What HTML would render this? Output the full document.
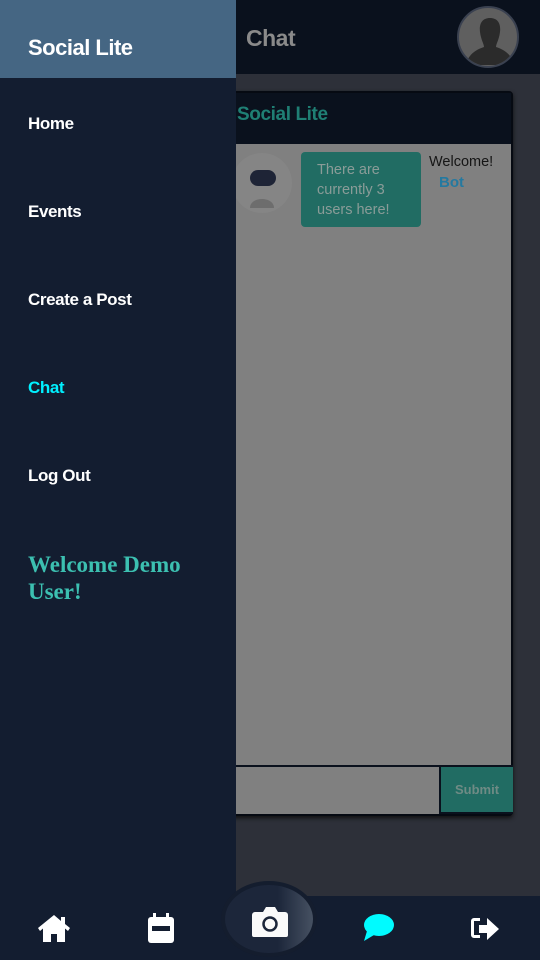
<!DOCTYPE html>
<html><head><style>
*{margin:0;padding:0;box-sizing:border-box}
body{width:540px;height:960px;overflow:hidden;background:#2d3039;font-family:"Liberation Sans",sans-serif;position:relative}
.top{position:absolute;left:0;top:0;width:540px;height:74px;background:#0a111d}
.title{position:absolute;left:246px;top:25px;color:#8a8a8a;font-size:23px;font-weight:bold;letter-spacing:-0.5px}
.av{position:absolute;left:457px;top:6px;width:62px;height:62px;border-radius:50%;background:#5f5f5f;border:2px solid #3a4150;overflow:hidden}
.card{position:absolute;left:180px;top:91px;width:333px;height:725px;background:#808080;border:2px solid #060a12;border-radius:4px;box-shadow:0 2px 4px #111}
.ch{position:absolute;left:0;top:0;right:0;height:51px;background:#0a111d}
.ch span{position:absolute;left:55px;top:11px;color:#1f7f74;font-size:19px;font-weight:bold;letter-spacing:-0.4px}
.bub{position:absolute;left:119px;top:59px;width:120px;height:75px;background:#216c63;border-radius:4px;color:#8a9c98;font-size:14.5px;line-height:20px;padding:8px 16px}
.wel{position:absolute;left:247px;top:61px;color:#151515;font-size:14.5px}
.bot{position:absolute;left:257px;top:81px;color:#2479a0;font-size:15px;font-weight:bold}
.inp{position:absolute;left:0;bottom:0;width:257px;height:49px;border-top:2px solid #0a111d;background:#808080}
.sub{position:absolute;left:257px;bottom:0;width:74px;height:49px;background:#216c63;border:2px solid #0a111d;border-right:0;color:#6f8b85;font-size:13px;font-weight:bold;text-align:center;line-height:45px}
.drawer{position:absolute;left:0;top:0;width:236px;height:896px;background:#131d30}
.dh{height:78px;background:#456683;color:#fff;font-size:22px;font-weight:bold;padding-left:28px;line-height:96px;letter-spacing:-0.5px}
.it{position:absolute;left:28px;color:#fff;font-size:17px;font-weight:bold;letter-spacing:-0.4px}
.wd{position:absolute;left:28px;top:551px;color:#3cc0b1;font-family:"Liberation Serif",serif;font-size:23px;font-weight:bold;line-height:27px}
.nav{position:absolute;left:0;top:896px;width:540px;height:64px;background:#131d30}
.cam{position:absolute;left:221px;top:881px;width:96px;height:76px;border-radius:50%;background:linear-gradient(90deg,#1c263a 60%,#465162);border:4px solid #141d2e}
svg{position:absolute}
</style></head><body>
<div class="top"></div>
<div class="title">Chat</div>
<div class="av"><svg width="62" height="62" viewBox="0 0 62 62" style="left:0;top:0"><path d="M31 10c8 0 11 6 10 14-1 8-4 12-4 15 9 3 16 8 18 18H7c2-10 9-15 18-18 0-3-3-7-4-15-1-8 2-14 10-14z" fill="#2b2b2b"/></svg></div>
<div class="card">
<div class="ch"><span>Social Lite</span></div>
<svg width="60" height="70" viewBox="0 0 60 70" style="left:50px;top:55px"><circle cx="30" cy="35" r="30" fill="#858585"/><rect x="18" y="22" width="26" height="16" rx="8" fill="#1e2436"/><path d="M18 60c0-12 24-12 24 0z" fill="#6d6d6d"/></svg>
<div class="bub">There are currently 3 users here!</div>
<div class="wel">Welcome!</div><div class="bot">Bot</div>
<div class="inp"></div><div class="sub">Submit</div>
</div>
<div class="drawer">
<div class="dh">Social Lite</div>
<div class="it" style="top:114px">Home</div>
<div class="it" style="top:202px">Events</div>
<div class="it" style="top:290px">Create a Post</div>
<div class="it" style="top:378px;color:#00f0ff">Chat</div>
<div class="it" style="top:466px">Log Out</div>
<div class="wd">Welcome Demo<br>User!</div>
</div>
<div class="nav"></div>
<div class="cam"></div>
<svg width="34" height="30" viewBox="0 0 34 30" style="left:37px;top:913px"><path d="M17 2L1 15l2 3 3-2.5V29h8v-8h6v8h8V15.5l3 2.5 2-3-5-4V4h-4v4z" fill="#fff"/></svg>
<svg width="26" height="30" viewBox="0 0 26 30" style="left:148px;top:913px"><rect x="5" y="0" width="3" height="6" fill="#fff"/><rect x="18" y="0" width="3" height="6" fill="#fff"/><rect x="0" y="4" width="26" height="26" rx="3" fill="#fff"/><rect x="4" y="13" width="18" height="5" fill="#131d30"/></svg>
<svg width="36" height="32" viewBox="0 0 36 32" style="left:252px;top:906px"><path d="M3 6h8l3-5h9l3 5h7a3 3 0 013 3v20a2 2 0 01-2 2H2a2 2 0 01-2-2V9a3 3 0 013-3z" fill="#fafafa"/><circle cx="18" cy="18" r="6.5" fill="none" stroke="#1c263a" stroke-width="2.5"/></svg>
<svg width="32" height="28" viewBox="0 0 32 28" style="left:363px;top:914px"><ellipse cx="16" cy="11" rx="15" ry="11" fill="#00fbff"/><path d="M4 17L1 27l10-6z" fill="#00fbff"/></svg>
<svg width="32" height="26" viewBox="0 0 32 26" style="left:470px;top:916px"><path d="M10 2H4a3 3 0 00-3 3v14a3 3 0 003 3h6v-3H4V5h6z" fill="#fff"/><path d="M9 9h8V2l12 11-12 11v-7H9z" fill="#fff"/></svg>
</body></html>
